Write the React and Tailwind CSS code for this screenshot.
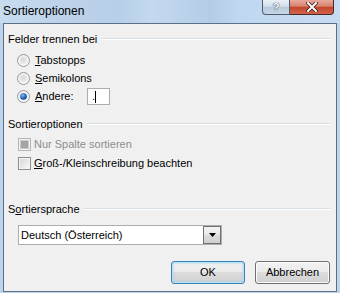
import React from 'react'

const font = "font-['Liberation_Sans',Arial,sans-serif]"

function Radio({ checked }) {
  return (
    <svg width="13" height="13" viewBox="0 0 13 13" className="shrink-0">
      <defs>
        <radialGradient id="rfill" cx="0.45" cy="0.4" r="0.6">
          <stop offset="0" stopColor="#d9d9d9" />
          <stop offset="0.6" stopColor="#e9e9e9" />
          <stop offset="1" stopColor="#fbfbfb" />
        </radialGradient>
        <radialGradient id="rdot" cx="0.4" cy="0.35" r="0.7">
          <stop offset="0" stopColor="#8ec3f2" />
          <stop offset="0.5" stopColor="#2b73c9" />
          <stop offset="1" stopColor="#0d3e86" />
        </radialGradient>
      </defs>
      <circle cx="6.5" cy="6.5" r="6" fill="url(#rfill)" stroke="#979797" />
      <circle cx="6.5" cy="6.5" r="4.6" fill="none" stroke="#ffffff" strokeOpacity="0.6" />
      {checked && <circle cx="6.5" cy="6.5" r="3.3" fill="url(#rdot)" />}
    </svg>
  )
}

function Check({ disabled }) {
  return (
    <svg width="13" height="13" viewBox="0 0 13 13" className="shrink-0">
      <defs>
        <linearGradient id="cfill" x1="0" y1="0" x2="1" y2="1">
          <stop offset="0" stopColor="#d8d8d8" />
          <stop offset="1" stopColor="#f6f6f6" />
        </linearGradient>
      </defs>
      <rect x="0.5" y="0.5" width="12" height="12" fill="#f4f4f4" stroke={disabled ? '#b4b4b4' : '#8f8f8f'} />
      {disabled ? (
        <rect x="2.5" y="2.5" width="8" height="8" fill="#a5a5a5" stroke="#c9c9c9" />
      ) : (
        <rect x="2" y="2" width="9" height="9" fill="url(#cfill)" />
      )}
    </svg>
  )
}

function Header({ children }) {
  return (
    <div className="flex items-center h-[14px]">
      <span className="whitespace-nowrap">{children}</span>
      <div className="flex-1 ml-[4px] border-t border-[#d5dfe5] border-b border-b-white" />
    </div>
  )
}

function Button({ children, primary }) {
  return (
    <div
      className={`h-[23px] rounded-[3px] border flex items-center justify-center ${
        primary ? 'border-[#3c7fb1] w-[74px] shadow-[inset_0_0_0_1px_#b8e3f8,inset_0_0_2px_1px_#7ec8ee]' : 'border-[#707070] w-[75px] shadow-[inset_0_0_0_1px_#fcfcfc]'
      } bg-[linear-gradient(to_bottom,#f2f2f2_0%,#ebebeb_45%,#dddddd_50%,#cfcfcf_100%)]`}
    >
      {children}
    </div>
  )
}

export default function App() {
  return (
    <div className={`w-[340px] h-[293px] flex flex-col bg-[#bcd3ea] ${font} text-[11px] text-black overflow-hidden`}>
      <div className="h-[23px] shrink-0 flex items-start relative bg-[linear-gradient(to_right,#c8dcef_0%,#bcd2e9_20%,#b7cfe8_35%,#c3d9ef_45%,#b4cce6_62%,#bfd7f0_70%,#c6dcf2_100%)]">
        <span className="ml-[3px] mt-[3px] text-[12px] leading-[16px] text-black">Sortieroptionen</span>
        <div className="ml-auto mr-[6px] flex h-[15px]">
          <div className="w-[28px] h-[15px] rounded-bl-[4px] border border-t-0 border-[#4c5a6c] bg-[linear-gradient(to_bottom,#e9f0f7_0%,#d3dfec_45%,#b8c9dc_50%,#c9d8e8_100%)] flex items-center justify-center">
            <span className="text-[11px] font-bold leading-none text-white [text-shadow:0_0_1px_#2a3a4c,0_0_1px_#2a3a4c]">?</span>
          </div>
          <div className="w-[44px] h-[15px] rounded-br-[4px] border border-l-0 border-t-0 border-[#4a2a24] bg-[linear-gradient(to_bottom,#e8a99c_0%,#d7826f_45%,#c4452c_50%,#d2644b_100%)] flex items-center justify-center">
            <svg width="12" height="10" viewBox="0 0 12 10">
              <path d="M2 1 L10 9 M10 1 L2 9" stroke="#3b1d18" strokeWidth="3.6" strokeLinecap="square" />
              <path d="M2 1 L10 9 M10 1 L2 9" stroke="#ffffff" strokeWidth="2" strokeLinecap="square" />
            </svg>
          </div>
        </div>
      </div>

      <div className="mx-[3px] h-[269px] border border-[#5b6f85] bg-[#f0f0f0] flex flex-col pl-[4px] pr-[6px]">
        <div className="mt-[8px]">
          <Header>Felder trennen bei</Header>
        </div>
        <div className="mt-[5px] pl-[9px] flex flex-col">
          <div className="h-[18px] flex items-center gap-[5px]">
            <Radio />
            <span><u>T</u>abstopps</span>
          </div>
          <div className="h-[18px] flex items-center gap-[5px]">
            <Radio />
            <span><u>S</u>emikolons</span>
          </div>
          <div className="h-[19px] flex items-center gap-[5px]">
            <Radio checked />
            <span className="w-[47px]"><u>A</u>ndere:</span>
            <div className="w-[23px] h-[17px] bg-white border border-[#abadb3] flex items-center pl-[4px]">
              <span className="leading-none">.</span>
              <span className="w-px h-[12px] bg-black" />
            </div>
          </div>
        </div>

        <div className="mt-[11px]">
          <Header>Sortieroptionen</Header>
        </div>
        <div className="mt-[4px] pl-[10px] flex flex-col gap-px">
          <div className="h-[18px] flex items-center gap-[3px] text-[#8d8d8d]">
            <Check disabled />
            <span>Nur Spalte sortieren</span>
          </div>
          <div className="h-[18px] flex items-center gap-[3px]">
            <Check />
            <span><u>G</u>roß-/Kleinschreibung beachten</span>
          </div>
        </div>

        <div className="mt-[30px]">
          <Header>S<u>o</u>rtiersprache</Header>
        </div>
        <div className="mt-[9px] pl-[10px]">
          <div className="w-[204px] h-[20px] bg-white border border-[#abadb3] flex items-center">
            <span className="flex-1 pl-[2px]">Deutsch (Österreich)</span>
            <div className="w-[18px] h-[18px] border border-[#707070] bg-[linear-gradient(to_bottom,#f2f2f2_0%,#ebebeb_45%,#dddddd_50%,#cfcfcf_100%)] flex items-center justify-center">
              <svg width="7" height="4" viewBox="0 0 7 4">
                <path d="M0 0 H7 L3.5 4 Z" fill="#000" />
              </svg>
            </div>
          </div>
        </div>

        <div className="mt-[16px] flex justify-end gap-[10px]">
          <Button primary>OK</Button>
          <Button>Abbrechen</Button>
        </div>
      </div>
    </div>
  )
}
